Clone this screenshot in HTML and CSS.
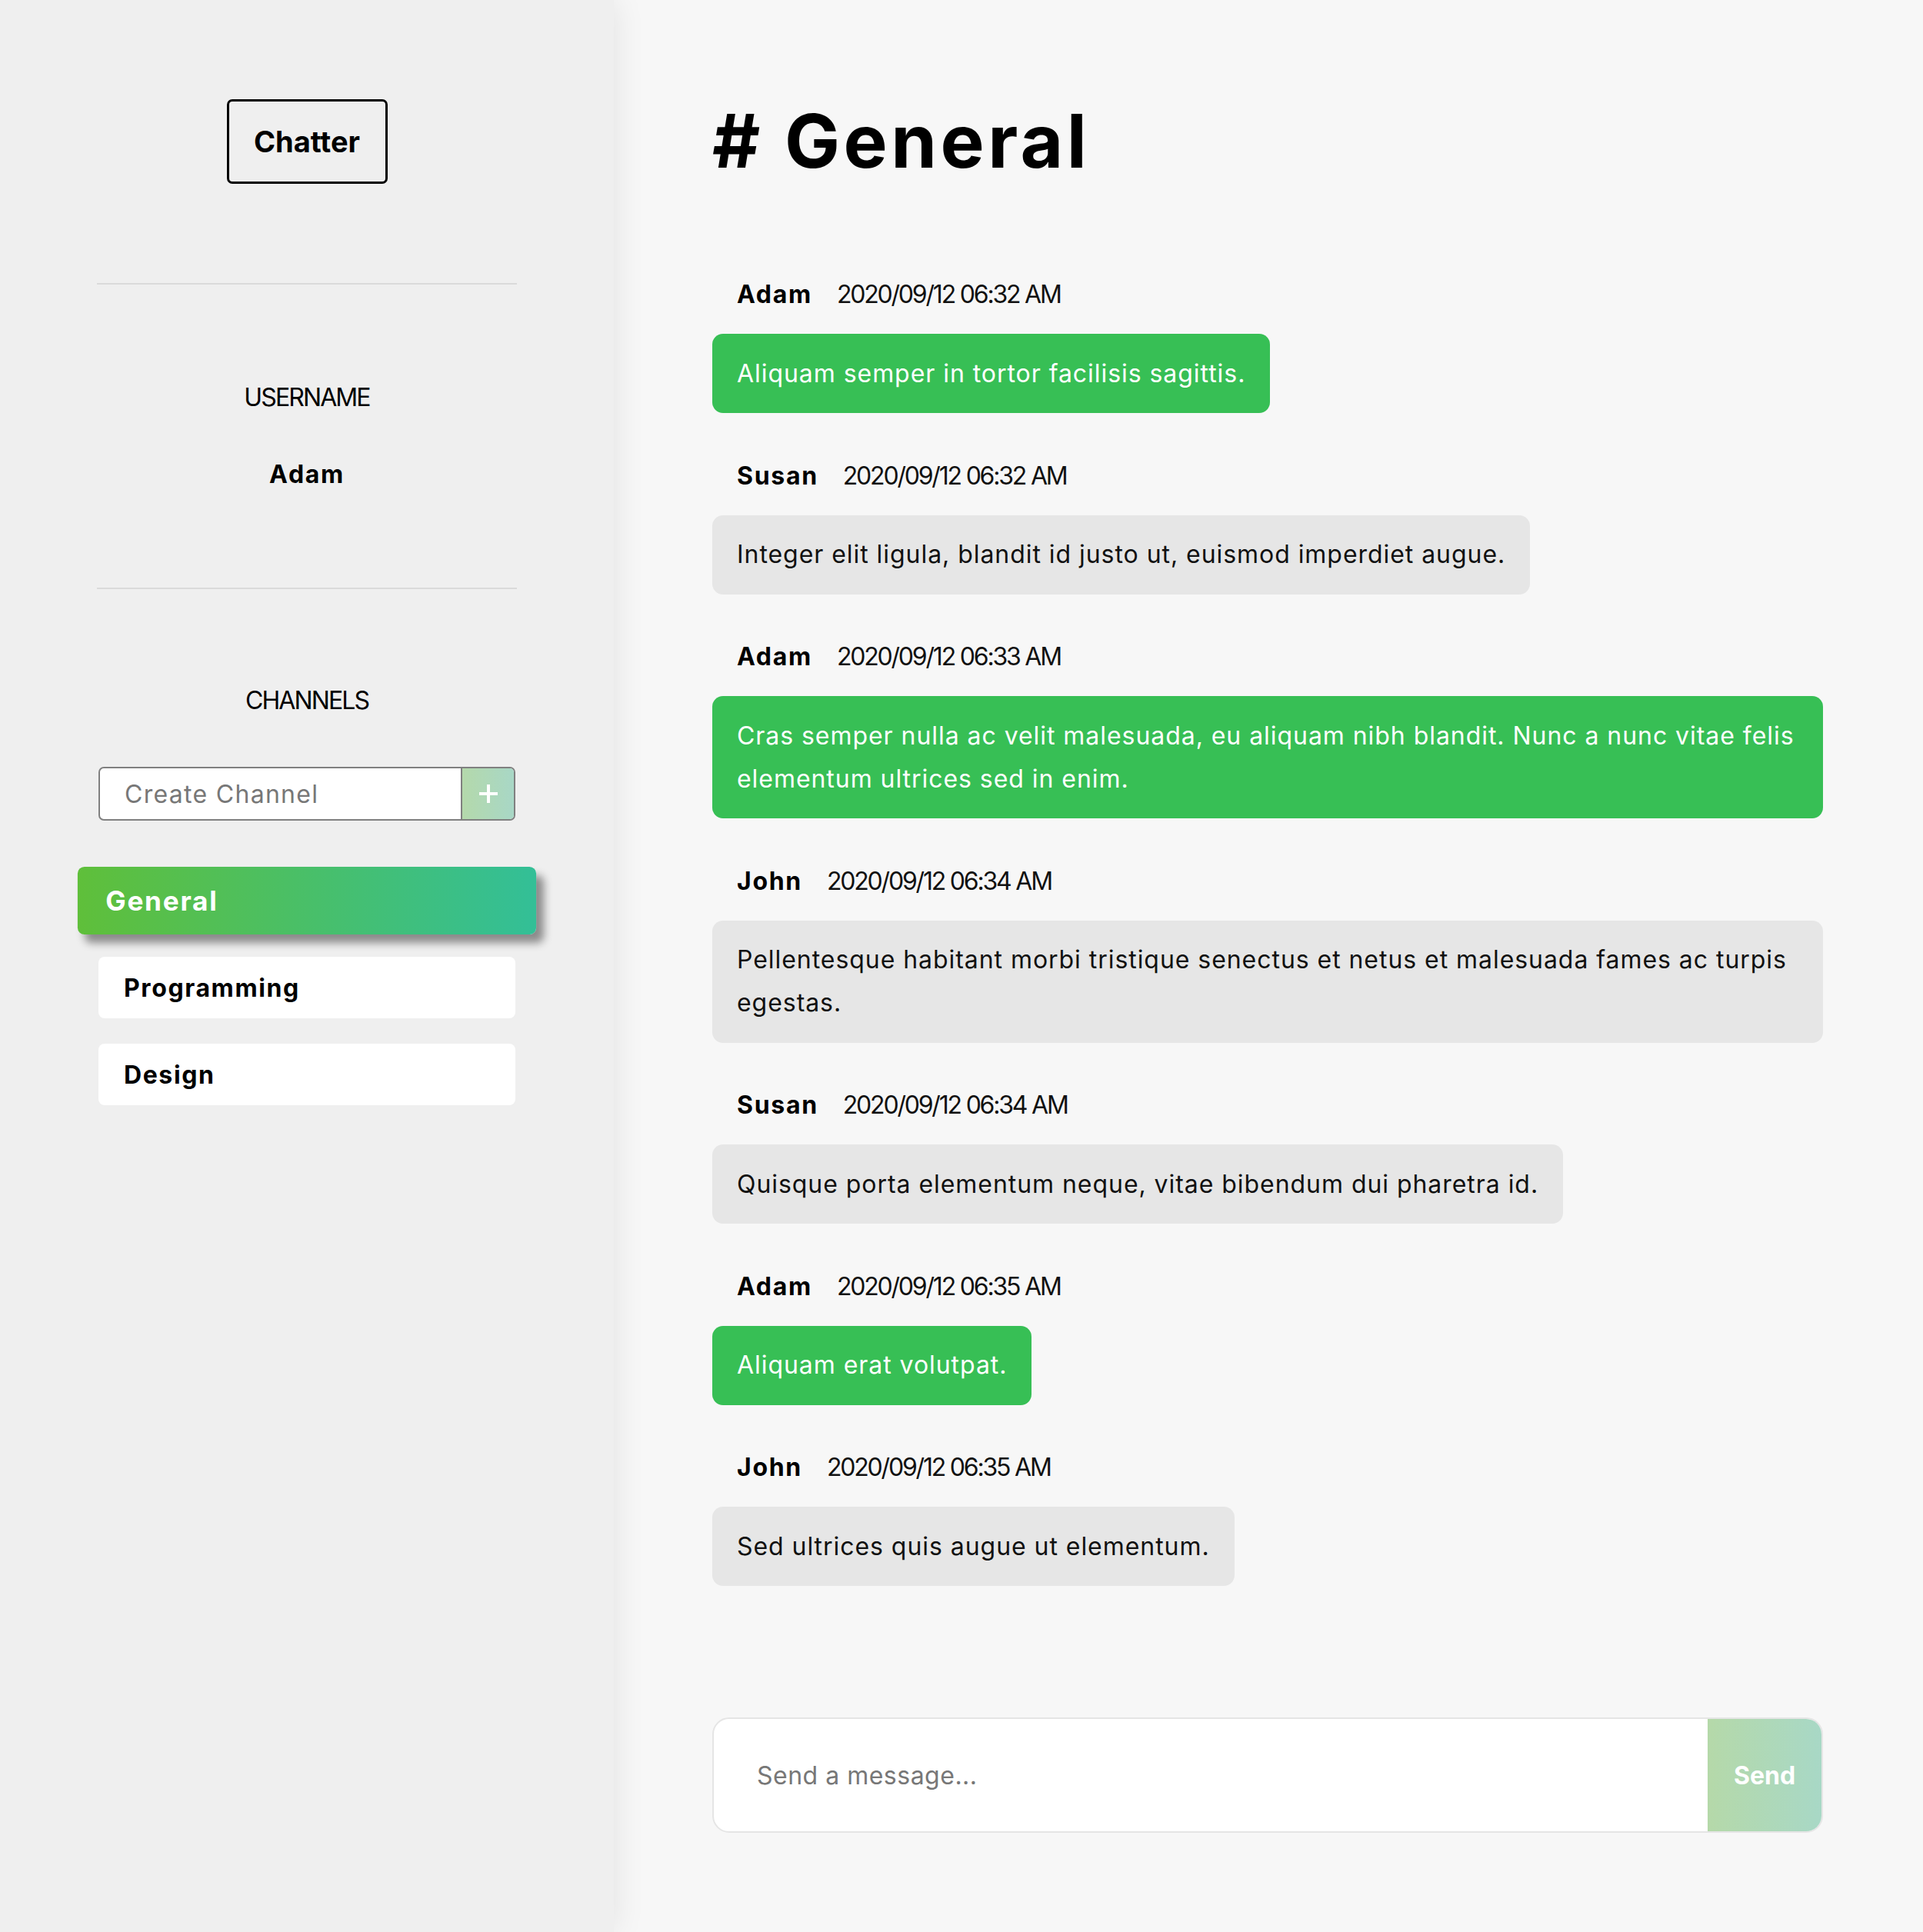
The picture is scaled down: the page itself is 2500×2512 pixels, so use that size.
FILE: index.html
```html
<!DOCTYPE html>
<html lang="en">
<head>
<meta charset="utf-8">
<title>Chatter</title>
<link rel="stylesheet" href="styles.css">
</head>
<body>
<div class="app">
  <aside class="sidebar">
    <div class="logo">Chatter</div>
    <div class="divider"></div>
    <div class="label user-label">USERNAME</div>
    <div class="username">Adam</div>
    <div class="divider"></div>
    <div class="label channels-label">CHANNELS</div>
    <form class="create">
      <input class="create-input" type="text" placeholder="Create Channel">
      <button class="create-btn" type="button" aria-label="Create">
        <svg width="26" height="26" viewBox="0 0 26 26"><path d="M13 1v24M1 13h24" stroke="#fff" stroke-width="4" fill="none"/></svg>
      </button>
    </form>
    <ul class="channels">
      <li class="channel active">General</li>
      <li class="channel">Programming</li>
      <li class="channel">Design</li>
    </ul>
  </aside>
  <main class="main">
    <h1 class="title"># General</h1>
    <div class="messages">
      <div class="msg mine">
        <div class="meta"><span class="name">Adam</span><span class="time">2020/09/12 06:32 AM</span></div>
        <div class="bubble">Aliquam semper in tortor facilisis sagittis.</div>
      </div>
      <div class="msg other">
        <div class="meta"><span class="name">Susan</span><span class="time">2020/09/12 06:32 AM</span></div>
        <div class="bubble">Integer elit ligula, blandit id justo ut, euismod imperdiet augue.</div>
      </div>
      <div class="msg mine">
        <div class="meta"><span class="name">Adam</span><span class="time">2020/09/12 06:33 AM</span></div>
        <div class="bubble">Cras semper nulla ac velit malesuada, eu aliquam nibh blandit. Nunc a nunc vitae felis elementum ultrices sed in enim.</div>
      </div>
      <div class="msg other">
        <div class="meta"><span class="name">John</span><span class="time">2020/09/12 06:34 AM</span></div>
        <div class="bubble">Pellentesque habitant morbi tristique senectus et netus et malesuada fames ac turpis egestas.</div>
      </div>
      <div class="msg other">
        <div class="meta"><span class="name">Susan</span><span class="time">2020/09/12 06:34 AM</span></div>
        <div class="bubble">Quisque porta elementum neque, vitae bibendum dui pharetra id.</div>
      </div>
      <div class="msg mine">
        <div class="meta"><span class="name">Adam</span><span class="time">2020/09/12 06:35 AM</span></div>
        <div class="bubble">Aliquam erat volutpat.</div>
      </div>
      <div class="msg other">
        <div class="meta"><span class="name">John</span><span class="time">2020/09/12 06:35 AM</span></div>
        <div class="bubble">Sed ultrices quis augue ut elementum.</div>
      </div>
    </div>
    <form class="composer">
      <input class="composer-input" type="text" placeholder="Send a message...">
      <button class="send-btn" type="button">Send</button>
    </form>
  </main>
</div>
</body>
</html>
```

FILE: styles.css
```css
* { box-sizing: border-box; margin: 0; padding: 0; }

html, body { height: 100%; }

body {
  font-family: Inter, "Open Sans", sans-serif;
  background: #f7f7f7;
  color: #000;
}

.app {
  display: flex;
  min-height: 100vh;
}

/* Sidebar */
.sidebar {
  width: 798px;
  flex: none;
  background: #efefef;
  padding: 129px 128px 0;
  display: flex;
  flex-direction: column;
  box-shadow: 0 0 40px rgba(0, 0, 0, 0.09);
  position: relative;
  z-index: 1;
}

.logo {
  align-self: center;
  width: 209px;
  height: 110px;
  border: 3px solid #000;
  border-radius: 7px;
  display: flex;
  align-items: center;
  justify-content: center;
  font-weight: 700;
  font-size: 38px;
}

.divider {
  height: 2px;
  background: #dadada;
  margin: 129px -2px 0;
}

.label {
  font-size: 32px;
  line-height: 48px;
  letter-spacing: -1.9px;
  text-align: center;
  font-weight: 400;
}

.user-label { margin-top: 123px; }

.username {
  margin-top: 52px;
  margin-bottom: 123px;
  font-size: 32px;
  line-height: 48px;
  letter-spacing: 1.7px;
  font-weight: 700;
  text-align: center;
}

.username + .divider { margin-top: 0; }

.channels-label { margin-top: 121px; }

.create {
  margin-top: 62px;
  height: 70px;
  display: flex;
  border: 2px solid #808080;
  border-radius: 7px;
  background: #fff;
  overflow: hidden;
}

.create-input {
  flex: 1;
  min-width: 0;
  border: 0;
  outline: none;
  background: transparent;
  padding-left: 32px;
  font-family: inherit;
  font-size: 32px;
  letter-spacing: 1.3px;
  color: #333;
}

.create-input::placeholder { color: #777; }

.create-btn {
  width: 69px;
  flex: none;
  border: 0;
  border-left: 2px solid #808080;
  background: linear-gradient(90deg, #b4d9ab, #a8d7c6);
  display: flex;
  align-items: center;
  justify-content: center;
}

.channels {
  list-style: none;
  margin-top: 64px;
  display: flex;
  flex-direction: column;
  gap: 33px;
}

.channel {
  height: 80px;
  background: #fff;
  border-radius: 8px;
  padding-left: 33px;
  display: flex;
  align-items: center;
  font-size: 32px;
  letter-spacing: 1.6px;
  font-weight: 700;
}

.channel.active {
  background: linear-gradient(90deg, #5fbf3a, #33bf97);
  color: #fff;
  transform: scale(1.1);
  box-shadow: 9px 10px 10px rgba(0, 0, 0, 0.42);
}

/* Main */
.main {
  flex: 1;
  min-width: 0;
  display: flex;
  flex-direction: column;
  padding: 123px 130px 129px 128px;
}

.title {
  font-size: 96px;
  line-height: 120px;
  letter-spacing: 4.5px;
  font-weight: 700;
}

.messages {
  flex: 1;
  margin-top: 116px;
}

.msg { margin-bottom: 57.5px; }

.meta {
  padding-left: 32px;
  margin-bottom: 27px;
  font-size: 32px;
  line-height: 48px;
  display: flex;
}

.name {
  font-weight: 700;
  letter-spacing: 1.7px;
  margin-right: 32px;
}

.time {
  color: #111;
  letter-spacing: -2.2px;
}

.bubble {
  width: fit-content;
  max-width: 100%;
  padding: 23.5px 32px;
  font-size: 32px;
  line-height: 56px;
  letter-spacing: 0.95px;
  border-radius: 14px;
  word-break: break-all;
}

.mine .bubble { background: #37bf55; color: #fff; }
.other .bubble { background: #e6e6e6; color: #111; }

.composer {
  height: 150px;
  display: flex;
  border: 2px solid #e5e5e5;
  border-radius: 22px;
  background: #fff;
  overflow: hidden;
}

.composer-input {
  flex: 1;
  min-width: 0;
  border: 0;
  outline: none;
  background: transparent;
  padding-left: 56px;
  font-family: inherit;
  font-size: 32px;
  letter-spacing: 0.5px;
  color: #333;
}

.composer-input::placeholder { color: #777; }

.send-btn {
  width: 148px;
  flex: none;
  border: 0;
  background: linear-gradient(90deg, #b5d9a9, #a8d8c6);
  color: #fff;
  font-family: inherit;
  font-size: 32px;
  font-weight: 700;
}
```
